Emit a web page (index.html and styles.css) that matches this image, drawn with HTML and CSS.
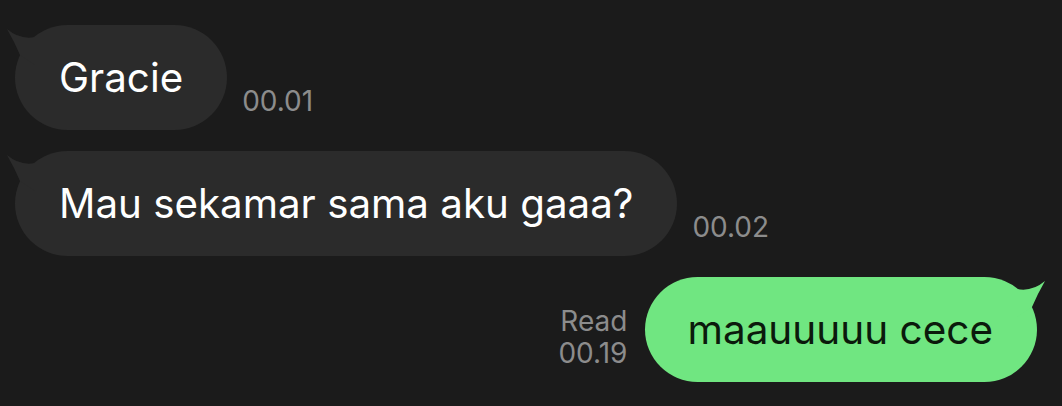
FILE: index.html
```html
<!DOCTYPE html>
<html>
<head>
<meta charset="utf-8">
<link rel="stylesheet" href="styles.css">
</head>
<body>
<div class="chat">
  <div class="row in">
    <div class="bubble gray">
      <svg class="tail tail-left" viewBox="0 0 40 40" width="40" height="40"><path d="M2 4 Q15 15 30 12 L30 40 L15 30 Q9 16 2 4 Z"/></svg>
      <span class="text">Gracie</span>
    </div>
    <div class="meta">00.01</div>
  </div>
  <div class="row in">
    <div class="bubble gray">
      <svg class="tail tail-left" viewBox="0 0 40 40" width="40" height="40"><path d="M2 4 Q15 15 30 12 L30 40 L15 30 Q9 16 2 4 Z"/></svg>
      <span class="text">Mau sekamar sama aku gaaa?</span>
    </div>
    <div class="meta">00.02</div>
  </div>
  <div class="row out">
    <div class="meta right">Read<br>00.19</div>
    <div class="bubble green">
      <svg class="tail tail-right" viewBox="0 0 40 40" width="40" height="40"><path d="M2 4 Q15 15 30 12 L30 40 L15 30 Q9 16 2 4 Z"/></svg>
      <span class="text">maauuuuu cece</span>
    </div>
  </div>
</div>
</body>
</html>
```
FILE: styles.css
```css
html, body {
  margin: 0;
  padding: 0;
  background: #1b1b1b;
}
body {
  font-family: Inter, "Noto Sans", sans-serif;
  width: 1062px;
  height: 406px;
  overflow: hidden;
}
.chat {
  display: flex;
  flex-direction: column;
  gap: 21px;
  padding: 25px 25px 0 15px;
}
.row {
  display: flex;
  align-items: flex-end;
  gap: 15px;
}
.row.out {
  justify-content: flex-end;
  gap: 18px;
}
.bubble {
  position: relative;
  height: 105px;
  padding: 0 44px;
  border-radius: 52.5px;
  display: flex;
  align-items: center;
  font-size: 40.3px;
  box-sizing: border-box;
}
.bubble.gray {
  background: #2b2b2b;
  color: #ffffff;
}
.bubble.green {
  background: #70e681;
  color: #0b1a0c;
  font-size: 40.5px;
  padding: 0 44px 0 42px;
}
.text {
  position: relative;
}
.tail {
  position: absolute;
  top: 0;
}
.gray .tail { fill: #2b2b2b; }
.green .tail { fill: #70e681; }
.tail-left { left: -10px; }
.tail-right { right: -10px; transform: scaleX(-1); }
.meta {
  color: #8c8c8c;
  font-size: 28px;
  line-height: 32px;
  padding-bottom: 13px;
}
.meta.right {
  text-align: right;
}
```
